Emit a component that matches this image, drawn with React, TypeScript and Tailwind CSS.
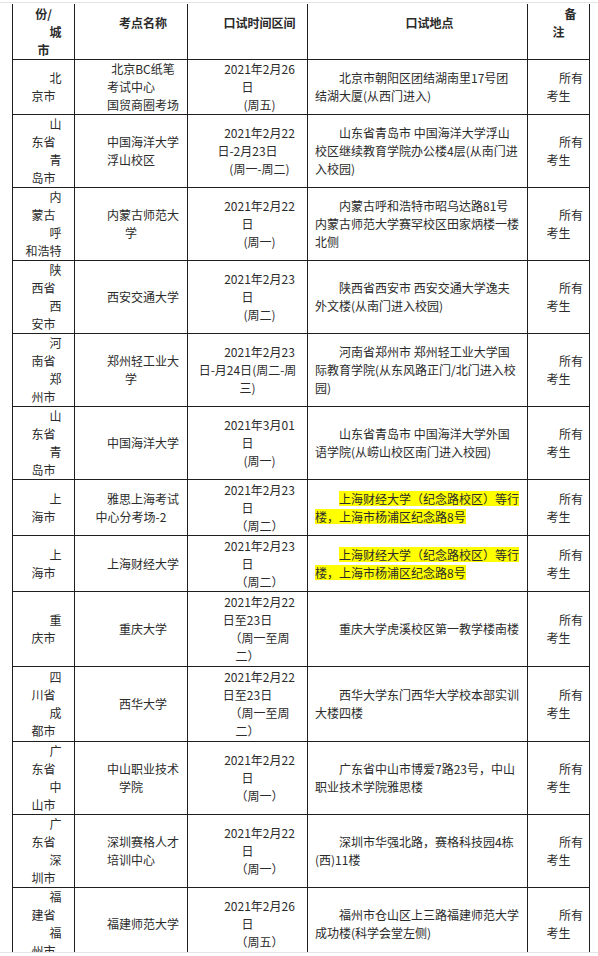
import React from "react";

type Para = string[];
type Row = {
  h: string;
  c1: Para[];
  c2: Para[];
  c3: Para[];
  c4: string[];
  hl?: boolean;
};

const rows: Row[] = [
  {
    h: "h-[55px]",
    c1: [["北", "京市"]],
    c2: [["北京BC纸笔", "考试中心"], ["国贸商圈考场"]],
    c3: [["2021年2月26", "日"], ["(周五)"]],
    c4: ["北京市朝阳区团结湖南里17号团", "结湖大厦(从西门进入)"],
  },
  {
    h: "h-[73px]",
    c1: [["山", "东省"], ["青", "岛市"]],
    c2: [["中国海洋大学", "浮山校区"]],
    c3: [["2021年2月22", "日-2月23日"], ["(周一-周二)"]],
    c4: ["山东省青岛市 中国海洋大学浮山", "校区继续教育学院办公楼4层(从南门进", "入校园)"],
  },
  {
    h: "h-[73px]",
    c1: [["内", "蒙古"], ["呼", "和浩特"]],
    c2: [["内蒙古师范大", "学"]],
    c3: [["2021年2月22", "日"], ["(周一)"]],
    c4: ["内蒙古呼和浩特市昭乌达路81号", "内蒙古师范大学赛罕校区田家炳楼一楼", "北侧"],
  },
  {
    h: "h-[73px]",
    c1: [["陕", "西省"], ["西", "安市"]],
    c2: [["西安交通大学"]],
    c3: [["2021年2月23", "日"], ["(周二)"]],
    c4: ["陕西省西安市 西安交通大学逸夫", "外文楼(从南门进入校园)"],
  },
  {
    h: "h-[73px]",
    c1: [["河", "南省"], ["郑", "州市"]],
    c2: [["郑州轻工业大", "学"]],
    c3: [["2021年2月23", "日-月24日(周二-周", "三)"]],
    c4: ["河南省郑州市 郑州轻工业大学国", "际教育学院(从东风路正门/北门进入校", "园)"],
  },
  {
    h: "h-[73px]",
    c1: [["山", "东省"], ["青", "岛市"]],
    c2: [["中国海洋大学"]],
    c3: [["2021年3月01", "日"], ["(周一)"]],
    c4: ["山东省青岛市 中国海洋大学外国", "语学院(从崂山校区南门进入校园)"],
  },
  {
    h: "h-[56px]",
    c1: [["上", "海市"]],
    c2: [["雅思上海考试", "中心分考场-2"]],
    c3: [["2021年2月23", "日"], ["（周二）"]],
    c4: ["上海财经大学（纪念路校区）等行", "楼，上海市杨浦区纪念路8号"],
    hl: true,
  },
  {
    h: "h-[56px]",
    c1: [["上", "海市"]],
    c2: [["上海财经大学"]],
    c3: [["2021年2月23", "日"], ["（周二）"]],
    c4: ["上海财经大学（纪念路校区）等行", "楼，上海市杨浦区纪念路8号"],
    hl: true,
  },
  {
    h: "h-[75px]",
    c1: [["重", "庆市"]],
    c2: [["重庆大学"]],
    c3: [["2021年2月22", "日至23日"], ["（周一至周", "二）"]],
    c4: ["重庆大学虎溪校区第一教学楼南楼"],
  },
  {
    h: "h-[75px]",
    c1: [["四", "川省"], ["成", "都市"]],
    c2: [["西华大学"]],
    c3: [["2021年2月22", "日至23日"], ["（周一至周", "二）"]],
    c4: ["西华大学东门西华大学校本部实训", "大楼四楼"],
  },
  {
    h: "h-[73px]",
    c1: [["广", "东省"], ["中", "山市"]],
    c2: [["中山职业技术", "学院"]],
    c3: [["2021年2月22", "日"], ["（周一）"]],
    c4: ["广东省中山市博爱7路23号，中山", "职业技术学院雅思楼"],
  },
  {
    h: "h-[73px]",
    c1: [["广", "东省"], ["深", "圳市"]],
    c2: [["深圳赛格人才", "培训中心"]],
    c3: [["2021年2月22", "日"], ["（周一）"]],
    c4: ["深圳市华强北路，赛格科技园4栋", "(西)11楼"],
  },
  {
    h: "h-[73px]",
    c1: [["福", "建省"], ["福", "州市"]],
    c2: [["福建师范大学"]],
    c3: [["2021年2月26", "日"], ["（周五）"]],
    c4: ["福州市仓山区上三路福建师范大学", "成功楼(科学会堂左侧)"],
  },
];

function Paras({ paras }: { paras: Para[] }) {
  return (
    <>
      {paras.map((p, i) => (
        <p key={i} className="indent-[24px] whitespace-nowrap">
          {p.map((line, j) => (
            <React.Fragment key={j}>
              {j > 0 && <br />}
              {line}
            </React.Fragment>
          ))}
        </p>
      ))}
    </>
  );
}

const cell = "border-r border-b border-[#1f1f1f] px-[7px] text-center align-middle";

export default function App() {
  return (
    <div
      className="w-[598px] h-[956px] overflow-hidden bg-white text-[12px] leading-[18px] text-[#2b2b2b]"
      style={{ fontFamily: '"Noto Sans CJK SC", "Noto Sans", sans-serif' }}
    >
      <div className="mt-[2px] h-px bg-[#e4e4e4]" />
      <div className="mt-px h-[948px] overflow-hidden">
        <table className="-mt-[17px] ml-[12px] w-[578px] table-fixed border-separate border-spacing-0 border-l border-[#1f1f1f]">
          <colgroup>
            <col className="w-[62px]" />
            <col className="w-[113px]" />
            <col className="w-[120px]" />
            <col className="w-[220px]" />
            <col className="w-[62px]" />
          </colgroup>
          <thead>
            <tr className="h-[73px] font-bold">
              <th className={cell}>
                <Paras paras={[["省", "份/"], ["城", "市"]]} />
              </th>
              <th className={cell}>
                <Paras paras={[["考点名称"]]} />
              </th>
              <th className={cell}>
                <Paras paras={[["口试时间区间"]]} />
              </th>
              <th className={cell}>
                <Paras paras={[["口试地点"]]} />
              </th>
              <th className={cell}>
                <Paras paras={[["备", "注"]]} />
              </th>
            </tr>
          </thead>
          <tbody>
            {rows.map((r, i) => (
              <tr key={i} className={r.h}>
                <td className={cell}>
                  <Paras paras={r.c1} />
                </td>
                <td className={cell}>
                  <Paras paras={r.c2} />
                </td>
                <td className={cell}>
                  <Paras paras={r.c3} />
                </td>
                <td className="border-r border-b border-[#1f1f1f] px-[7px] text-left align-middle">
                  <p className="indent-[24px] whitespace-nowrap">
                    {r.c4.map((line, j) => (
                      <React.Fragment key={j}>
                        {j > 0 && <br />}
                        {r.hl ? (
                          <span className="inline-block indent-0 bg-[#ffff00] leading-[15px]">{line}</span>
                        ) : (
                          line
                        )}
                      </React.Fragment>
                    ))}
                  </p>
                </td>
                <td className={cell}>
                  <Paras paras={[["所有", "考生"]]} />
                </td>
              </tr>
            ))}
          </tbody>
        </table>
      </div>
      <div className="h-px bg-[#e4e4e4]" />
    </div>
  );
}
